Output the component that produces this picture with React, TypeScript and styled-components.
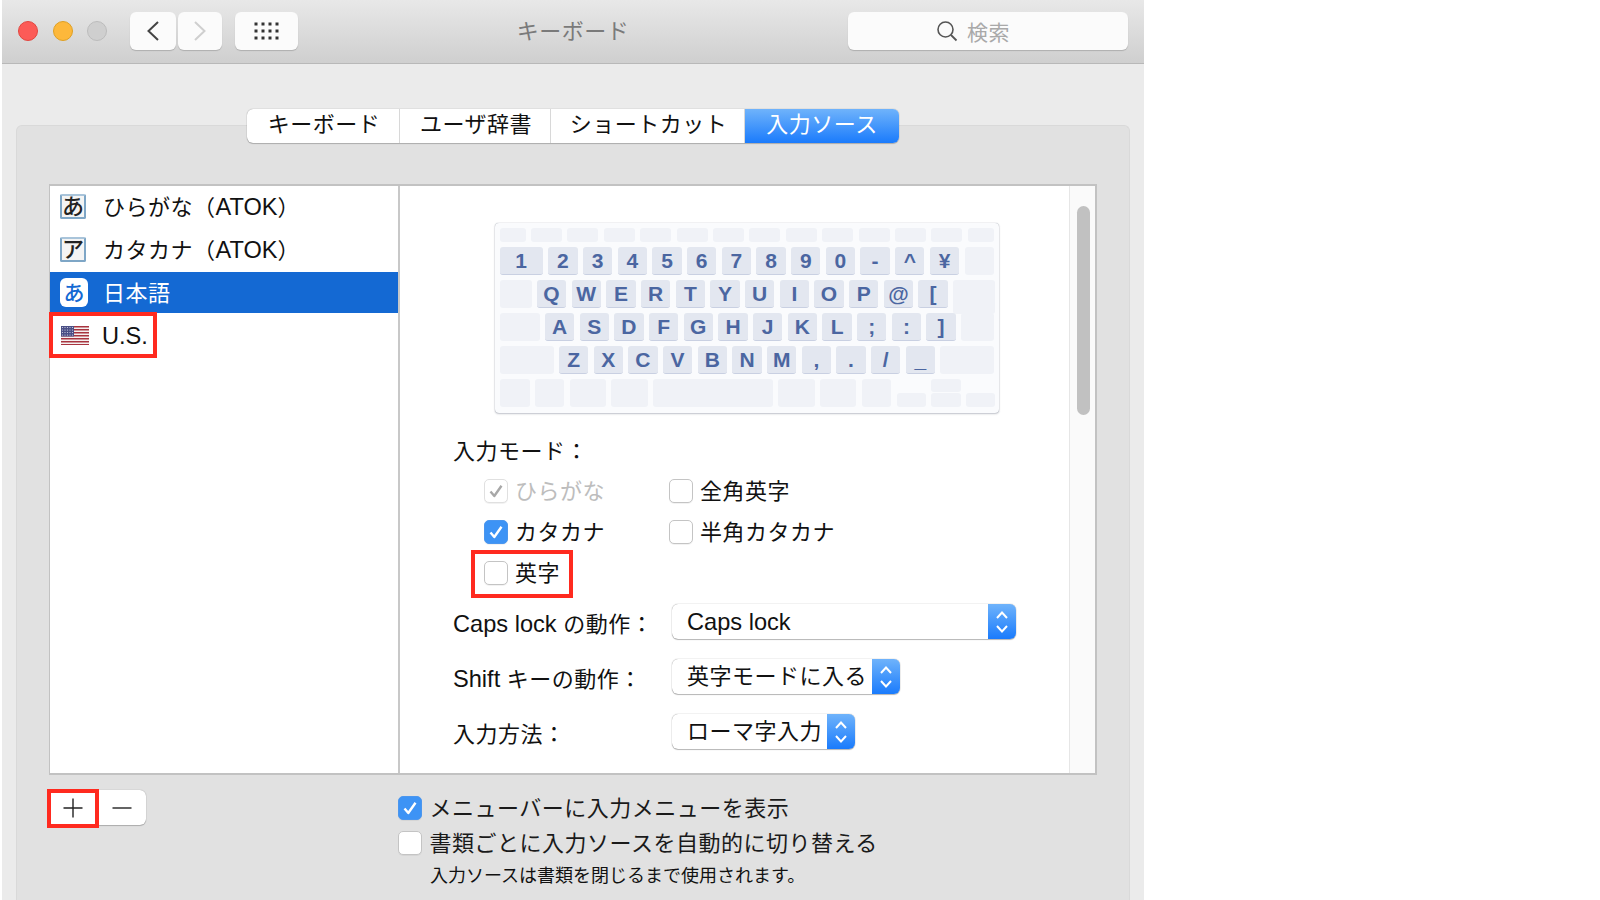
import React from "react";
import styled, { createGlobalStyle } from "styled-components";

const Global = createGlobalStyle`
  html, body { margin: 0; padding: 0; background: #fff; }
  body { font-family: "Liberation Sans", "Noto Sans CJK JP", sans-serif; color: #111; letter-spacing: 0.5px; }
  #root { width: 1600px; height: 900px; overflow: hidden; }
`;

const Page = styled.div`
  width: 1600px;
  height: 900px;
  padding-left: 2px;
  box-sizing: border-box;
  overflow: hidden;
  background: #fff;
`;
const Win = styled.div`
  width: 1142px;
  height: 900px;
  background: #ebebeb;
  display: flex;
  flex-direction: column;
`;
const TitleBar = styled.div`
  flex: none;
  height: 64px;
  box-sizing: border-box;
  border-bottom: 1px solid #b8b8b8;
  background: linear-gradient(#e8e8e8, #cfcfcf);
  display: flex;
  align-items: flex-start;
  padding-top: 12px;
  position: relative;
`;
const Lights = styled.div`
  display: flex;
  gap: 14.5px;
  margin: 9px 0 0 16px;
`;
const Light = styled.span<{ $c: string; $b: string }>`
  width: 20px;
  height: 20px;
  box-sizing: border-box;
  border-radius: 50%;
  background: ${(p) => p.$c};
  border: 1px solid ${(p) => p.$b};
`;
const ToolBtn = styled.div<{ $w: number; $ml: number }>`
  width: ${(p) => p.$w}px;
  height: 38px;
  margin-left: ${(p) => p.$ml}px;
  border-radius: 6px;
  background: #fbfbfb;
  box-shadow: 0 1px 1px rgba(0, 0, 0, 0.18);
  display: flex;
  align-items: center;
  justify-content: center;
`;
const Title = styled.div`
  position: absolute;
  left: 0;
  right: 0;
  top: 14px;
  text-align: center;
  font-size: 22px;
  line-height: 36px;
  color: #7a7a7a;
`;
const Search = styled.div`
  width: 280px;
  height: 38px;
  margin-left: auto;
  margin-right: 16px;
  border-radius: 6px;
  background: #fbfbfb;
  box-shadow: 0 1px 1px rgba(0, 0, 0, 0.18);
  display: flex;
  align-items: center;
  justify-content: center;
  gap: 9px;
  padding-right: 30px;
  box-sizing: border-box;
  font-size: 21px;
  color: #a9a9a9;
  position: relative;
  z-index: 1;
`;
const Body = styled.div`
  flex: 1;
  padding: 44.5px 14px 0;
  display: flex;
  flex-direction: column;
`;
const Tabs = styled.div`
  align-self: center;
  display: flex;
  height: 34px;
  position: relative;
  z-index: 1;
  border-radius: 6px;
  box-shadow: 0 0 1px rgba(0, 0, 0, 0.45), 0 1px 1px rgba(0, 0, 0, 0.2);
  background: #fff;
`;
const Tab = styled.div<{ $w: number; $active?: boolean }>`
  width: ${(p) => p.$w}px;
  box-sizing: border-box;
  text-align: center;
  padding-left: ${(p) => (p.$active ? 0 : 2)}px;
  font-size: 22px;
  line-height: 32px;
  border-right: ${(p) => (p.$active ? "0" : "1px solid #d8d8d8")};
  color: ${(p) => (p.$active ? "#fff" : "#111")};
  background: ${(p) => (p.$active ? "linear-gradient(#6fb3fb, #1a7bfc)" : "transparent")};
  border-radius: ${(p) => (p.$active ? "0 6px 6px 0" : "0")};
`;
const Panel = styled.div`
  flex: 1;
  margin-top: -17.5px;
  box-sizing: border-box;
  border: 1px solid #d9d9d9;
  border-bottom: 0;
  border-radius: 6px 6px 0 0;
  background: #e1e1e1;
  padding: 58px 32px 0;
`;
const ListBox = styled.div`
  height: 591px;
  box-sizing: border-box;
  border: 1px solid #c2c2c2;
  border-width: 2px 2px 2px 1px;
  background: #fff;
  display: flex;
`;
const SourceList = styled.div`
  width: 350px;
  flex: none;
  box-sizing: border-box;
  border-right: 2px solid #c8c8c8;
`;
const SourceRow = styled.div<{ $sel?: boolean }>`
  height: 41px;
  margin-bottom: 2px;
  display: flex;
  align-items: center;
  position: relative;
  padding-left: 10px;
  font-size: 22px;
  background: ${(p) => (p.$sel ? "#1469d3" : "transparent")};
  color: ${(p) => (p.$sel ? "#fff" : "#111")};
`;
const RowText = styled.span`
  padding-bottom: 4px;
  white-space: nowrap;
`;
const Latin = styled.span`
  font-size: 23.6px;
  letter-spacing: 0;
  line-height: 1;
`;
const FlagLabel = styled(Latin)`
  padding-top: 2px;
`;
const SourceIcon = styled.span<{ $sel?: boolean }>`
  width: ${(p) => (p.$sel ? 28 : 26)}px;
  height: ${(p) => (p.$sel ? 29 : 25)}px;
  margin-right: ${(p) => (p.$sel ? 15 : 17)}px;
  box-sizing: border-box;
  border-radius: ${(p) => (p.$sel ? 6 : 2)}px;
  border: ${(p) => (p.$sel ? "0" : "2px solid #7ea6c6")};
  border-top-color: ${(p) => (p.$sel ? "transparent" : "#a9c4da")};
  background: ${(p) => (p.$sel ? "#fff" : "#f4f4f4")};
  color: ${(p) => (p.$sel ? "#1469d3" : "#222")};
  display: flex;
  align-items: center;
  justify-content: center;
  font-size: ${(p) => (p.$sel ? 21 : 22)}px;
  font-weight: 500;
  letter-spacing: 0;
  line-height: 1;
`;
const FlagBox = styled.span`
  width: 28px;
  height: 19px;
  margin: 0 13px 0 1px;
  display: flex;
`;
const Marker = styled.span<{ $l: number; $t: number; $w: number; $h: number }>`
  position: absolute;
  left: ${(p) => p.$l}px;
  top: ${(p) => p.$t}px;
  width: ${(p) => p.$w}px;
  height: ${(p) => p.$h}px;
  box-sizing: border-box;
  border: 4px solid #ff2a1f;
  pointer-events: none;
`;
const Detail = styled.div`
  flex: 1;
  min-width: 0;
  padding: 37px 0 0 53px;
`;
const ScrollTrack = styled.div`
  width: 26px;
  flex: none;
  box-sizing: border-box;
  border-left: 1px solid #e6e6e6;
  background: #fafafa;
  padding: 20px 0 0 7px;
`;
const ScrollThumb = styled.div`
  width: 13px;
  height: 209px;
  border-radius: 7px;
  background: #c1c1c1;
`;
const Board = styled.div`
  width: 504px;
  height: 190px;
  margin-left: 42px;
  box-sizing: border-box;
  border-radius: 4px;
  background: #fafbfd;
  box-shadow: 0 0 1px rgba(70, 80, 100, 0.6), 0 1px 2px rgba(70, 80, 100, 0.3);
  padding: 5px 0 0 4.5px;
  display: flex;
  flex-direction: column;
  gap: 5px;
`;
const KeyRow = styled.div<{ $h: number }>`
  display: flex;
  gap: 5.4px;
  height: ${(p) => p.$h}px;
  margin-bottom: ${(p) => (p.$h === 14 ? 0 : 0.5)}px;
`;
const Key = styled.div<{ $w: number; $on?: boolean; $join?: boolean }>`
  flex: none;
  width: ${(p) => p.$w}px;
  box-sizing: border-box;
  border-radius: 3px;
  background: ${(p) => (p.$on ? "#e3e7f0" : "#f0f2f7")};
  border-bottom: ${(p) => (p.$on ? "1px solid #c9d0e2" : "0")};
  margin-bottom: ${(p) => (p.$join ? -6 : 0)}px;
  display: flex;
  align-items: center;
  justify-content: center;
  font-size: 21px;
  font-weight: 700;
  letter-spacing: 0;
  color: #4b66a1;
  line-height: 1;
`;
const ArrowStack = styled.div`
  flex: none;
  width: 29.3px;
  display: flex;
  flex-direction: column;
`;
const ArrowUp = styled.div`
  height: 13px;
  border-radius: 3px;
  background: #f0f2f7;
  margin-bottom: 1px;
`;
const ArrowLow = styled.div<{ $top?: number }>`
  flex: none;
  width: 29.3px;
  height: 14px;
  margin-top: ${(p) => p.$top ?? 0}px;
  border-radius: 3px;
  background: #f0f2f7;
`;
const ModeTitle = styled.div`
  margin-top: 24px;
  font-size: 22px;
  line-height: 30px;
`;
const CheckGrid = styled.div`
  margin-top: 3px;
  padding-left: 31px;
  display: grid;
  grid-template-columns: 185px 1fr;
  grid-auto-rows: 41px;
`;
const CheckItem = styled.label<{ $off?: boolean }>`
  display: flex;
  align-items: center;
  position: relative;
  gap: 7px;
  font-size: 22px;
  color: ${(p) => (p.$off ? "#bdbdbd" : "#111")};
`;
const Box = styled.span<{ $state?: "on" | "dim" }>`
  flex: none;
  width: 24px;
  height: 24px;
  box-sizing: border-box;
  border-radius: 5px;
  border: 1px solid ${(p) => (p.$state === "on" ? "#4b96ee" : p.$state === "dim" ? "#e0e0e0" : "#c4c4c4")};
  background: ${(p) => (p.$state === "on" ? "#3d93f5" : "#fff")};
  box-shadow: 0 1px 0 rgba(0, 0, 0, 0.05);
  display: flex;
  align-items: center;
  justify-content: center;
`;
const SelectRows = styled.div`
  margin-top: 11px;
  display: flex;
  flex-direction: column;
  gap: 20px;
`;
const SelectRow = styled.div`
  display: flex;
  height: 35px;
`;
const SelectLabel = styled.div`
  width: 219px;
  flex: none;
  font-size: 22px;
  line-height: 41px;
  white-space: nowrap;
`;
const Select = styled.div<{ $w: number }>`
  width: ${(p) => p.$w}px;
  box-sizing: border-box;
  display: flex;
  border-radius: 6px;
  background: #fff;
  box-shadow: 0 0 1px rgba(0, 0, 0, 0.5), 0 1px 1px rgba(0, 0, 0, 0.25);
  overflow: hidden;
`;
const SelectText = styled.div<{ $lh?: number }>`
  flex: 1;
  padding-left: 15px;
  font-size: 22px;
  line-height: ${(p) => p.$lh ?? 35}px;
  white-space: nowrap;
`;
const SelectArrow = styled.div`
  flex: none;
  width: 28px;
  background: linear-gradient(#6fb3fb, #1a7bfc);
  display: flex;
  align-items: center;
  justify-content: center;
`;
const BottomBar = styled.div`
  display: flex;
  align-items: flex-start;
  margin-top: 15px;
`;
const AddRemove = styled.div`
  flex: none;
  width: 97px;
  height: 35px;
  display: flex;
  background: #fff;
  border-radius: 6px;
  box-shadow: 0 0 1px rgba(0, 0, 0, 0.4), 0 1px 1px rgba(0, 0, 0, 0.2);
  position: relative;
`;
const AddRemoveBtn = styled.div`
  flex: 1;
  display: flex;
  align-items: center;
  justify-content: center;
  padding-top: 1px;
`;
const Options = styled.div`
  margin-left: 252px;
  display: flex;
  flex-direction: column;
`;
const OptionRow = styled.label`
  display: flex;
  align-items: center;
  gap: 7.5px;
  height: 35px;
  font-size: 22px;
  color: #1a1a1a;
  white-space: nowrap;
`;
const Note = styled.div`
  padding-left: 32px;
  font-size: 18px;
  line-height: 32px;
  letter-spacing: 0;
  white-space: nowrap;
`;

const Check = ({ color }: { color: string }) => (
  <svg width="16" height="16" viewBox="0 0 16 16">
    <path d="M2.5 8.5 L6.3 13 L13.5 2.8" fill="none" stroke={color} strokeWidth="2.4" strokeLinejoin="round" />
  </svg>
);

const Updown = () => (
  <svg width="14" height="26" viewBox="0 0 14 26">
    <path d="M2 9 L7 3.5 L12 9 M2 17 L7 22.5 L12 17" fill="none" stroke="#fff" strokeWidth="2" />
  </svg>
);

const Flag = () => (
  <svg width="28" height="19" viewBox="0 0 28 19">
    <rect width="28" height="19" fill="#f4f0f0" />
    {[0, 3, 6, 9, 12, 15, 18].map((y) => (
      <rect key={y} x="0" y={y} width="28" height="1.5" fill="#a8343f" />
    ))}
    <rect width="13" height="10.5" fill="#4a4f86" />
    {[1.5, 4, 6.5, 9].map((y) =>
      [1.5, 4, 6.5, 9, 11.5].map((x) => <circle key={`${x}-${y}`} cx={x} cy={y} r="0.6" fill="#d8d8e6" />)
    )}
  </svg>
);

type KeyData = { t: string; w: number; on: boolean; join?: boolean };
const K = 29.3;
const w = (chars: string): KeyData[] => chars.split("").map((c) => ({ t: c, w: K, on: true }));
const blank = (n: number, join?: boolean): KeyData => ({ t: "", w: n, on: false, join });
const fn = [26.2, 31, 31, 31, 31, 31, 31, 31, 31, 31, 31, 31, 31, 26];
const rows: KeyData[][] = [
  [{ t: "1", w: 43.4, on: true }, ...w("234567890-^¥"), blank(29.7)],
  [blank(32), ...w("QWERTYUIOP@["), blank(41.4, true)],
  [blank(40), ...w("ASDFGHJKL;:]"), blank(32.8)],
  [blank(54), ...w("ZXCVBNM,./_"), blank(53.4)],
];
const bottom = [30, 29.3, 36.2, 36.5, 119.7, 36.5, 36.2, 29.6];

export default function App() {
  return (
    <Page>
      <Global />
      <Win>
        <TitleBar>
          <Lights>
            <Light $c="#fc5b57" $b="#e2463f" />
            <Light $c="#fdb83b" $b="#dfa023" />
            <Light $c="#cfcfcf" $b="#bcbcbc" />
          </Lights>
          <ToolBtn $w={46} $ml={23}>
            <svg width="16" height="22" viewBox="0 0 16 22">
              <path d="M13 2 L3.5 11 L13 20" fill="none" stroke="#444" strokeWidth="2" />
            </svg>
          </ToolBtn>
          <ToolBtn $w={44} $ml={2}>
            <svg width="16" height="22" viewBox="0 0 16 22">
              <path d="M3 2 L12.5 11 L3 20" fill="none" stroke="#cfcfcf" strokeWidth="2" />
            </svg>
          </ToolBtn>
          <ToolBtn $w={63} $ml={13}>
            <svg width="26" height="18" viewBox="0 0 26 18">
              {[2, 9, 16].map((y) =>
                [2, 9, 16, 23].map((x) => <rect key={`${x}-${y}`} x={x - 1.5} y={y - 1.5} width="3" height="3" fill="#333" />)
              )}
            </svg>
          </ToolBtn>
          <Title>キーボード</Title>
          <Search>
            <svg width="22" height="22" viewBox="0 0 22 22">
              <circle cx="9.5" cy="9.5" r="7.5" fill="none" stroke="#555" strokeWidth="1.6" />
              <path d="M15 15 L20.5 20.5" stroke="#555" strokeWidth="1.8" />
            </svg>
            <span>検索</span>
          </Search>
        </TitleBar>
        <Body>
          <Tabs>
            <Tab $w={153}>キーボード</Tab>
            <Tab $w={151}>ユーザ辞書</Tab>
            <Tab $w={194}>ショートカット</Tab>
            <Tab $w={154} $active>
              入力ソース
            </Tab>
          </Tabs>
          <Panel>
            <ListBox>
              <SourceList>
                <SourceRow>
                  <SourceIcon>あ</SourceIcon>
                  <RowText>
                    ひらがな（<Latin>ATOK</Latin>）
                  </RowText>
                </SourceRow>
                <SourceRow>
                  <SourceIcon>ア</SourceIcon>
                  <RowText>
                    カタカナ（<Latin>ATOK</Latin>）
                  </RowText>
                </SourceRow>
                <SourceRow $sel>
                  <SourceIcon $sel>あ</SourceIcon>
                  <RowText>日本語</RowText>
                </SourceRow>
                <SourceRow>
                  <FlagBox>
                    <Flag />
                  </FlagBox>
                  <FlagLabel>U.S.</FlagLabel>
                  <Marker $l={-1} $t={-3} $w={108} $h={46} />
                </SourceRow>
              </SourceList>
              <Detail>
                <Board>
                  <KeyRow $h={14}>
                    {fn.map((n, i) => (
                      <Key key={i} $w={n} />
                    ))}
                  </KeyRow>
                  {rows.map((r, i) => (
                    <KeyRow key={i} $h={27.5}>
                      {r.map((k, j) => (
                        <Key key={j} $w={k.w} $on={k.on} $join={k.join}>
                          {k.t}
                        </Key>
                      ))}
                    </KeyRow>
                  ))}
                  <KeyRow $h={27.5}>
                    {bottom.map((n, i) => (
                      <Key key={i} $w={n} />
                    ))}
                    <ArrowLow $top={14} />
                    <ArrowStack>
                      <ArrowUp />
                      <ArrowLow />
                    </ArrowStack>
                    <ArrowLow $top={14} />
                  </KeyRow>
                </Board>
                <ModeTitle>入力モード：</ModeTitle>
                <CheckGrid>
                  <CheckItem $off>
                    <Box $state="dim">
                      <Check color="#a8a8a8" />
                    </Box>
                    <RowText>ひらがな</RowText>
                  </CheckItem>
                  <CheckItem>
                    <Box />
                    <RowText>全角英字</RowText>
                  </CheckItem>
                  <CheckItem>
                    <Box $state="on">
                      <Check color="#fff" />
                    </Box>
                    <RowText>カタカナ</RowText>
                  </CheckItem>
                  <CheckItem>
                    <Box />
                    <RowText>半角カタカナ</RowText>
                  </CheckItem>
                  <CheckItem>
                    <Box />
                    <RowText>英字</RowText>
                    <Marker $l={-13} $t={-2} $w={102} $h={48} />
                  </CheckItem>
                </CheckGrid>
                <SelectRows>
                  <SelectRow>
                    <SelectLabel>
                      <Latin>Caps lock</Latin> の動作：
                    </SelectLabel>
                    <Select $w={344}>
                      <SelectText $lh={38}>
                        <Latin>Caps lock</Latin>
                      </SelectText>
                      <SelectArrow>
                        <Updown />
                      </SelectArrow>
                    </Select>
                  </SelectRow>
                  <SelectRow>
                    <SelectLabel>
                      <Latin>Shift</Latin> キーの動作：
                    </SelectLabel>
                    <Select $w={228}>
                      <SelectText>英字モードに入る</SelectText>
                      <SelectArrow>
                        <Updown />
                      </SelectArrow>
                    </Select>
                  </SelectRow>
                  <SelectRow>
                    <SelectLabel>入力方法：</SelectLabel>
                    <Select $w={183}>
                      <SelectText>ローマ字入力</SelectText>
                      <SelectArrow>
                        <Updown />
                      </SelectArrow>
                    </Select>
                  </SelectRow>
                </SelectRows>
              </Detail>
              <ScrollTrack>
                <ScrollThumb />
              </ScrollTrack>
            </ListBox>
            <BottomBar>
              <AddRemove>
                <AddRemoveBtn>
                  <svg width="20" height="20" viewBox="0 0 20 20">
                    <path d="M10 0.5 V19.5 M0.5 10 H19.5" stroke="#222" strokeWidth="1.4" />
                  </svg>
                </AddRemoveBtn>
                <AddRemoveBtn>
                  <svg width="20" height="20" viewBox="0 0 20 20">
                    <path d="M0.5 10 H19.5" stroke="#222" strokeWidth="1.4" />
                  </svg>
                </AddRemoveBtn>
                <Marker $l={-2} $t={-1} $w={52} $h={39} />
              </AddRemove>
              <Options>
                <OptionRow>
                  <Box $state="on">
                    <Check color="#fff" />
                  </Box>
                  <RowText>メニューバーに入力メニューを表示</RowText>
                </OptionRow>
                <OptionRow>
                  <Box />
                  <RowText>書類ごとに入力ソースを自動的に切り替える</RowText>
                </OptionRow>
                <Note>入力ソースは書類を閉じるまで使用されます。</Note>
              </Options>
            </BottomBar>
          </Panel>
        </Body>
      </Win>
    </Page>
  );
}
